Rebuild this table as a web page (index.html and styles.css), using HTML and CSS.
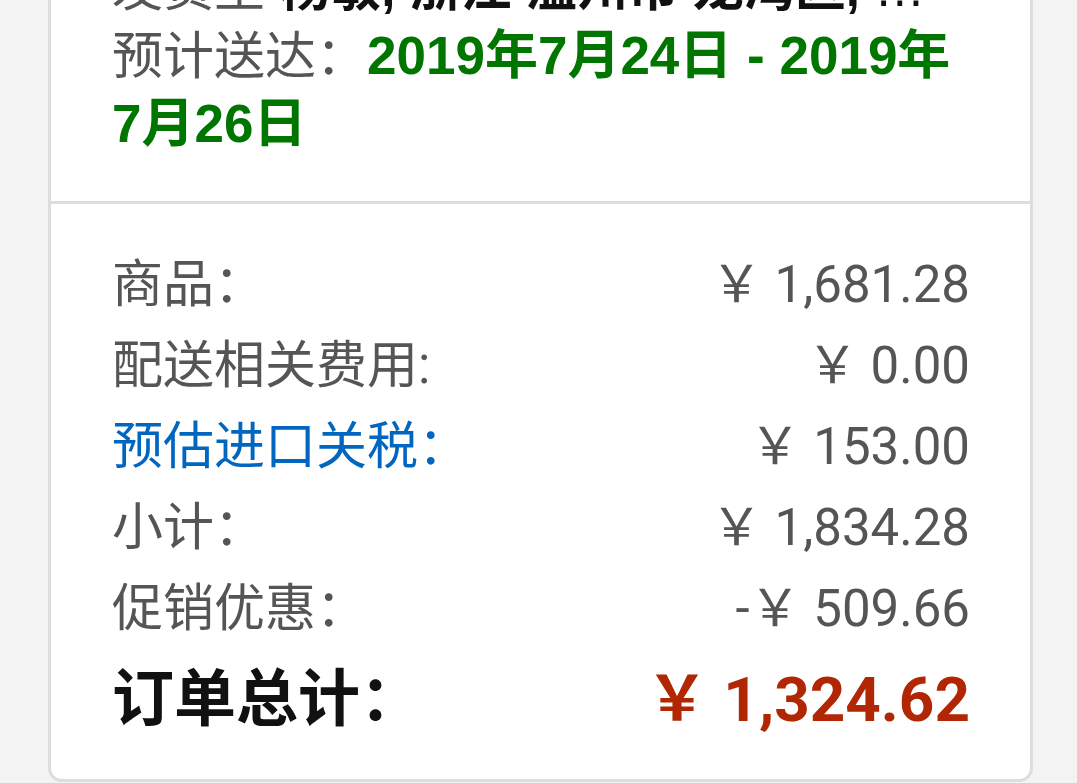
FILE: index.html
```html
<!DOCTYPE html>
<html lang="zh-CN">
<head>
<meta charset="utf-8">
<title>订单摘要</title>
<link rel="stylesheet" href="styles.css">
</head>
<body>
<div class="card">
  <div class="delivery">
    <div class="ship"><span class="ship-label">发货至</span> <span class="ship-addr">杨敏, 浙江 温州市 龙湾区, 浙江省温州市龙湾区永中街道</span></div>
    <div class="eta"><span class="eta-label">预计送达：</span><span class="eta-date">2019年7月24日 - 2019年<wbr>7月26日</span></div>
  </div>
  <div class="summary">
    <div class="row"><span class="label">商品：</span><span class="value">￥ 1,681.28</span></div>
    <div class="row"><span class="label">配送相关费用:</span><span class="value">￥ 0.00</span></div>
    <div class="row"><span class="label link">预估进口关税：</span><span class="value">￥ 153.00</span></div>
    <div class="row"><span class="label">小计：</span><span class="value">￥ 1,834.28</span></div>
    <div class="row"><span class="label">促销优惠：</span><span class="value">-￥ 509.66</span></div>
    <div class="row total"><span class="label">订单总计：</span><span class="value">￥ 1,324.62</span></div>
  </div>
</div>
</body>
</html>
```
FILE: styles.css
```css
html, body {
  margin: 0;
  padding: 0;
  background: #f3f3f3;
  overflow: hidden;
}

.card {
  box-sizing: border-box;
  width: 985px;
  margin: -48px 44px 0 48px;
  background: #ffffff;
  border: 3px solid #dddddd;
  border-radius: 0 0 14px 14px;
}

.delivery {
  padding: 0 61px 44px 61px;
  border-bottom: 3px solid #dddddd;
  font-family: "Liberation Sans", "Noto Sans CJK SC", sans-serif;
  font-size: 53px;
  line-height: 67px;
}

.ship {
  white-space: nowrap;
  overflow: hidden;
  text-overflow: ellipsis;
  color: #111111;
  font-size: 51px;
}

.ship-label {
  color: #555555;
}

.ship-addr {
  font-weight: bold;
}

.eta-label {
  color: #555555;
  font-size: 51px;
}

.eta-date {
  color: #007600;
  font-weight: bold;
  word-break: keep-all;
}

.summary {
  padding: 40px 60px 29px 61px;
  font-family: Roboto, "Noto Sans CJK SC", sans-serif;
  font-size: 51px;
  color: #555555;
}

.row {
  display: flex;
  justify-content: space-between;
  align-items: center;
  height: 81px;
}

.label,
.value {
  line-height: 1;
  white-space: nowrap;
}

.link {
  color: #0066c0;
}

.total {
  height: 101px;
  font-size: 62px;
  font-weight: bold;
}

.total .label {
  color: #111111;
}

.total .value {
  color: #b12704;
}
```
